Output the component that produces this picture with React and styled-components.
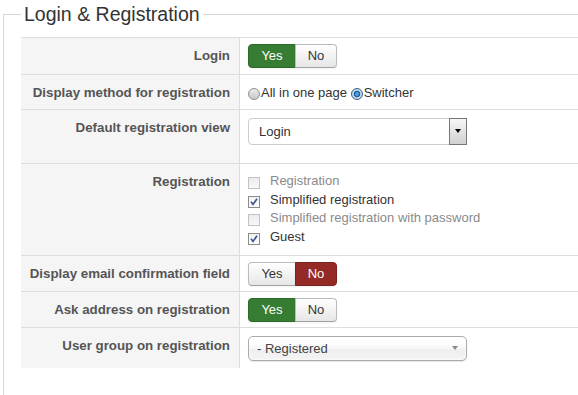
import React from 'react';
import styled, { createGlobalStyle, css } from 'styled-components';

const GlobalStyle = createGlobalStyle`
  html, body {
    margin: 0;
    padding: 0;
    overflow: hidden;
    background: #fff;
  }
  body {
    font-family: "Liberation Sans", Arial, sans-serif;
    color: #333;
  }
`;

const Page = styled.div`
  width: 578px;
  height: 395px;
  overflow: hidden;
`;

const Fieldset = styled.fieldset`
  margin: 0 0 0 3px;
  padding: 9px 0 60px 17px;
  width: 700px;
  min-width: 0;
  border: 1px solid #d6d6d6;
`;

const Legend = styled.legend`
  padding: 0 3px;
  font-size: 19.5px;
  line-height: 28px;
  color: #333;
`;

const Row = styled.div`
  display: grid;
  grid-template-columns: 219px 1fr;
  border-top: 1px solid #ddd;
`;

const Label = styled.div`
  background: #f5f5f5;
  border-right: 1px solid #ddd;
  text-align: right;
  padding: 9px 9px 0 0;
  font-size: 13.3px;
  font-weight: bold;
  line-height: 18px;
  color: #555;
`;

const Value = styled.div`
  padding: ${(p) => p.$pad || '6px 8px 5px'};
  font-size: 13px;
  color: #333;
`;

const Toggle = styled.div`
  display: inline-flex;
  height: 24px;
`;

const ToggleBtn = styled.span`
  box-sizing: border-box;
  width: ${(p) => p.$w}px;
  height: 24px;
  text-align: center;
  font-size: 13px;
  line-height: 22px;
  border: 1px solid #bbb;
  border-bottom-color: #a2a2a2;
  background: linear-gradient(#ffffff, #e6e6e6);
  color: #333;
  box-shadow: 0 1px 2px rgba(0, 0, 0, 0.05);

  &:first-child {
    border-radius: 4px 0 0 4px;
  }
  &:last-child {
    border-radius: 0 4px 4px 0;
    margin-left: -1px;
  }

  ${(p) =>
    p.$active === 'green' &&
    css`
      background: #377c33;
      border-color: #2b6a28;
      color: #fff;
    `}
  ${(p) =>
    p.$active === 'red' &&
    css`
      background: #942a25;
      border-color: #7c221e;
      color: #fff;
    `}
`;

const YesNo = ({ value }) => (
  <Toggle>
    <ToggleBtn $w={48} $active={value === 'yes' ? 'green' : undefined}>Yes</ToggleBtn>
    <ToggleBtn $w={42} $active={value === 'no' ? 'red' : undefined}>No</ToggleBtn>
  </Toggle>
);

const RadioLine = styled.div`
  line-height: 23px;
  white-space: nowrap;
`;

const Radio = styled.span`
  display: inline-block;
  box-sizing: border-box;
  width: 12px;
  height: 12px;
  margin-right: 1px;
  vertical-align: -3px;
  border-radius: 50%;
  border: 1px solid #8f8f8f;
  background: linear-gradient(#ececec, #c9c9c9);

  ${(p) =>
    p.$checked &&
    css`
      border-color: #3a5f86;
      background: radial-gradient(circle, #4d9be0 0 1.5px, #0d4f96 2.8px, #bcd2e8 3.6px, #e6ecf2 100%);
    `}
`;

const SelectBox = styled.div`
  box-sizing: border-box;
  display: flex;
  align-items: center;
  width: 219px;
  height: 27px;
  margin: 2px 0 13px;
  border: 1px solid #ccc;
  border-radius: 4px;
  background: #fff;
`;

const SelectText = styled.span`
  flex: 1;
  padding-left: 10px;
  font-size: 13px;
  color: #333;
`;

const ArrowBox = styled.span`
  align-self: stretch;
  display: flex;
  align-items: center;
  justify-content: center;
  width: 16px;
  margin: -1px -1px -1px 0;
  border: 1px solid #767676;
  background: linear-gradient(#f7f7f7, #d0d0d0);
`;

const Caret = styled.span`
  width: 0;
  height: 0;
  margin-top: -1px;
  border-left: 3.5px solid transparent;
  border-right: 3.5px solid transparent;
  border-top: 4px solid ${(p) => p.$color || '#000'};
`;

const ChosenBox = styled.div`
  box-sizing: border-box;
  display: flex;
  align-items: center;
  width: 219px;
  height: 25px;
  margin: 2px 0 2px;
  padding: 0 8px;
  border: 1px solid #aaa;
  border-radius: 5px;
  background: linear-gradient(#fff 20%, #f6f6f6 50%, #eee 52%, #f4f4f4 100%);
  box-shadow: 0 0 3px #fff inset, 0 1px 1px rgba(0, 0, 0, 0.1);
  font-size: 13px;
  color: #444;
`;

const ChosenText = styled.span`
  flex: 1;
`;

const CheckList = styled.div`
  padding: 2px 0 4px;
`;

const CheckLine = styled.div`
  line-height: 18.5px;
  white-space: nowrap;
  color: ${(p) => (p.$checked ? '#333' : '#8a8a8a')};
`;

const Box = styled.span`
  display: inline-block;
  box-sizing: border-box;
  width: 12px;
  height: 12px;
  margin-right: 10px;
  vertical-align: -4px;
  border: 1px solid ${(p) => (p.$checked ? '#8c8c8c' : '#c2c2c2')};
  background: ${(p) => (p.$checked ? 'linear-gradient(#f2f2f2, #fbfbfb)' : 'linear-gradient(#ececec, #f8f8f8)')};

  svg {
    display: block;
  }
`;

const Check = ({ checked, children }) => (
  <CheckLine $checked={checked}>
    <Box $checked={checked}>
      {checked && (
        <svg width="10" height="10" viewBox="0 0 10 10">
          <path d="M2 4.8 L4 7.4 L8 1.8" fill="none" stroke="#3b4f92" strokeWidth="1.6" />
        </svg>
      )}
    </Box>
    {children}
  </CheckLine>
);

export default function App() {
  return (
    <Page>
      <GlobalStyle />
      <Fieldset>
        <Legend>Login &amp; Registration</Legend>

        <Row>
          <Label>Login</Label>
          <Value $pad="6px 8px 6px">
            <YesNo value="yes" />
          </Value>
        </Row>

        <Row>
          <Label>Display method for registration</Label>
          <Value>
            <RadioLine>
              <Radio />All in one page <Radio $checked />Switcher
            </RadioLine>
          </Value>
        </Row>

        <Row>
          <Label>Default registration view</Label>
          <Value>
            <SelectBox>
              <SelectText>Login</SelectText>
              <ArrowBox>
                <Caret />
              </ArrowBox>
            </SelectBox>
          </Value>
        </Row>

        <Row>
          <Label>Registration</Label>
          <Value>
            <CheckList>
              <Check>Registration</Check>
              <Check checked>Simplified registration</Check>
              <Check>Simplified registration with password</Check>
              <Check checked>Guest</Check>
            </CheckList>
          </Value>
        </Row>

        <Row>
          <Label>Display email confirmation field</Label>
          <Value>
            <YesNo value="no" />
          </Value>
        </Row>

        <Row>
          <Label>Ask address on registration</Label>
          <Value>
            <YesNo value="yes" />
          </Value>
        </Row>

        <Row>
          <Label>User group on registration</Label>
          <Value>
            <ChosenBox>
              <ChosenText>- Registered</ChosenText>
              <Caret $color="#888" />
            </ChosenBox>
          </Value>
        </Row>
      </Fieldset>
    </Page>
  );
}
